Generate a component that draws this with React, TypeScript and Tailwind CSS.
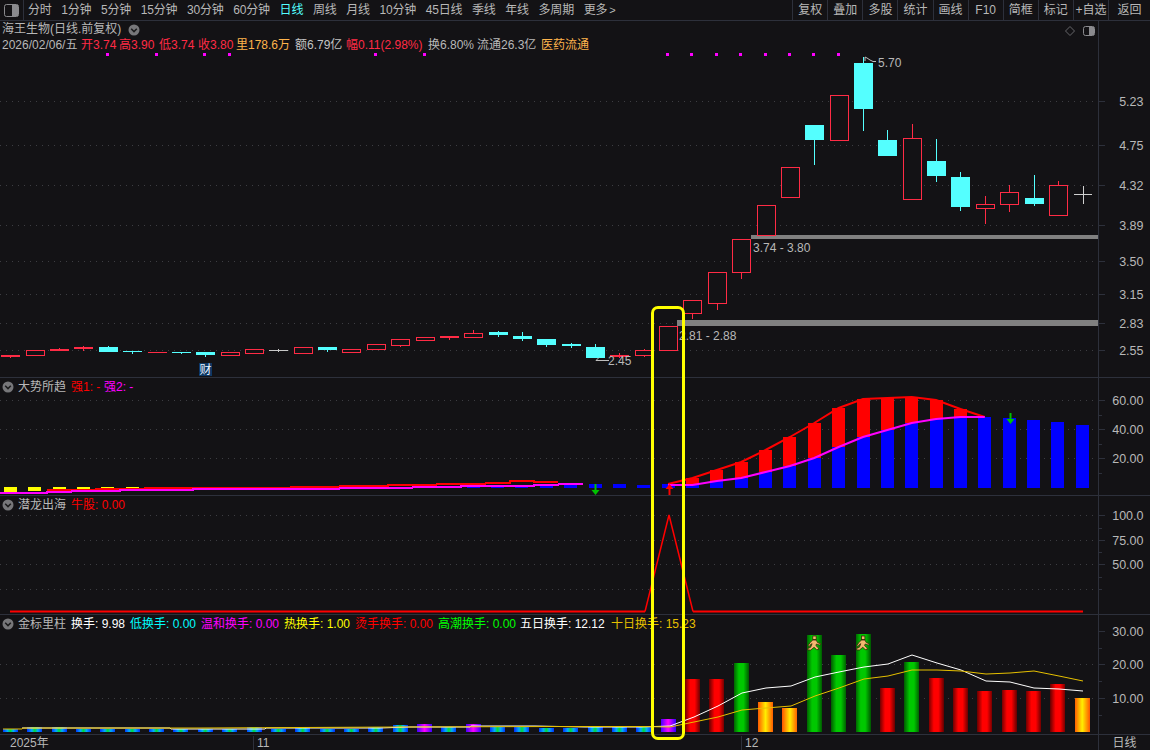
import * as React from "react";

const FONT = "font-['Liberation_Sans','Noto_Sans_CJK_SC',sans-serif]";
const BG = "#131215";
const AXIS_LINE = "#2d303b";
const UP = "#ff2b45";
const DOWN = "#54ffff";

const barX = (i: number) => 10.4 + 24.36 * i;

// [index, bodyTop, bodyBottom, wickTop, wickBottom, kind]
type Candle = [number, number, number, number, number, "up" | "down" | "solid" | "flat"];
const candles: Candle[] = [
    [0, 355, 357, 355, 358, "solid"], [1, 350, 355, 350, 355, "up"], [2, 349, 351, 348, 351, "solid"],
    [3, 347, 349, 346, 351, "solid"], [4, 347, 352, 346, 352, "down"], [5, 351, 352, 351, 354, "down"],
    [6, 352, 353, 352, 353, "solid"], [7, 352, 353, 352, 354, "down"], [8, 352, 355, 352, 357, "down"],
    [9, 352, 355, 352, 355, "up"], [10, 349, 353, 349, 353, "up"], [11, 350, 351, 349, 352, "flat"],
    [12, 347, 353, 347, 353, "up"], [13, 347, 350, 347, 352, "down"], [14, 349, 352, 349, 352, "up"],
    [15, 344, 349, 344, 349, "up"], [16, 339, 345, 339, 347, "up"], [17, 337, 340, 337, 340, "up"],
    [18, 336, 338, 336, 340, "solid"], [19, 333, 337, 330, 337, "up"], [20, 332, 335, 331, 337, "down"],
    [21, 336, 339, 332, 341, "down"], [22, 339, 345, 339, 347, "down"], [23, 344, 346, 343, 348, "down"],
    [24, 347, 358, 344, 358, "down"], [25, 355, 357, 353, 358, "solid"], [26, 350, 355, 349, 357, "up"],
    [27, 326, 350, 326, 350, "up"], [28, 300, 313, 300, 319, "up"], [29, 272, 303, 272, 310, "up"],
    [30, 239, 272, 239, 279, "up"], [31, 205, 235, 205, 235, "up"], [32, 167, 197, 167, 198, "up"],
    [33, 125, 140, 125, 165, "down"], [34, 95, 140, 95, 140, "up"], [35, 63, 109, 57, 131, "down"],
    [36, 140, 156, 130, 156, "down"], [37, 138, 199, 124, 199, "up"], [38, 161, 176, 139, 182, "down"],
    [39, 177, 207, 172, 211, "down"], [40, 204, 208, 196, 224, "up"], [41, 192, 204, 185, 212, "up"],
    [42, 198, 204, 175, 206, "down"], [43, 185, 215, 181, 215, "up"],
];

const pinkDots = [4, 6, 8, 9, 15, 17, 27, 28, 29, 30, 31, 32, 33, 34];

const redTop: [number, number][] = [[27, 484], [28, 478], [29, 470], [30, 462], [31, 450], [32, 437], [33, 423], [34, 408], [35, 399], [36, 398], [37, 397], [38, 400], [39, 409], [40, 417]];
const pinkTop: [number, number][] = [[27, 485], [28, 485], [29, 481], [30, 478], [31, 472], [32, 466], [33, 458], [34, 447], [35, 437], [36, 430], [37, 423], [38, 419], [39, 417], [40, 417]];
const blueTail: [number, number][] = [[41, 418], [42, 420], [43, 422], [44, 425]];
const blueStart: [number, number][] = [[19, 486], [20, 485], [21, 485], [22, 484], [23, 483], [24, 484], [25, 484], [26, 485], [27, 484]];
const yellowDash: [number, number][] = [[0, 494], [1, 491], [2, 491], [3, 490], [4, 489], [5, 489], [6, 488.5], [7, 488.5], [8, 488.5], [9, 488.5], [10, 488.5], [11, 488.5]];

const lowPink = [493, 493, 492, 491, 491, 490, 490, 490, 489, 489, 489, 489, 489, 489, 488, 488, 488, 487, 487, 486, 486, 486, 485, 484];
const lowRed: [number, number][] = [[2, 490], [3, 490], [4, 489], [5, 489], [6, 488], [7, 488], [8, 488], [9, 488], [10, 488], [11, 488], [12, 487], [13, 487], [14, 486], [15, 486], [16, 485], [17, 485], [18, 484], [19, 484], [20, 483], [21, 481], [22, 482]];

const smallTops = [729, 727, 727, 729, 729, 729, 729, 729, 729, 729, 727, 729, 727, 729, 729, 727, 725, 724, 727, 724, 727, 727, 728, 728, 727, 727, 727];
const purpleBars = [17, 19];

const volBars: [number, number, string][] = [
    [28, 679, "r"], [29, 679, "r"], [30, 663, "g"], [31, 702, "o"], [32, 708, "o"], [33, 635, "g"], [34, 655, "g"],
    [35, 634, "g"], [36, 688, "r"], [37, 662, "g"], [38, 678, "r"], [39, 688, "r"], [40, 691, "r"], [41, 690, "r"],
    [42, 691, "r"], [43, 684, "r"], [44, 698, "o"],
];
const whiteLine = "22,728 170,728 171,729 265,729 266,728 380,728 410,727 470,727 471,726 535,726 585,727 640,727 670,726 694,717 718,706 742,693 766,688 791,686 815,677 839,672 864,667 888,664 912,655 937,663 961,670 986,681 1010,682 1034,688 1059,689 1083,691";
const goldLine = "3,729 22,729 23,728 200,728 400,727 560,726.500 640,726.500 670,727 694,722 718,717 742,710 766,708 791,706 815,696 839,688 864,679 888,676 912,670 937,670 961,671 986,674 1010,673 1034,671 1059,676 1083,681";

const periods = ["分时", "1分钟", "5分钟", "15分钟", "30分钟", "60分钟", "日线", "周线", "月线", "10分钟", "45日线", "季线", "年线", "多周期"];
const tools = ["复权", "叠加", "多股", "统计", "画线", "F10", "简框", "标记", "+自选", "返回"];

const Chevron = () => (
    <svg width="12" height="12" viewBox="0 0 12 12" className="shrink-0">
        <circle cx="6" cy="6" r="5.5" fill="#77777a"/>
        <path d="M3.2 4.8 6 7.6 8.8 4.8" fill="none" stroke="#1b1b1d" strokeWidth="1.5"/>
    </svg>
);

const Grid = ({ys}: {ys: number[]}) => (
    <>
        {ys.map((y) => (
            <line key={y} x1="0" x2="1098" y1={y + 0.5} y2={y + 0.5} stroke="#3d3d42" strokeDasharray="1 5"/>
        ))}
    </>
);

const Axis = ({top, height, labels, minor = []}: {top: number; height: number; labels: [string, number][]; minor?: number[]}) => (
    <svg width="52" height={height} viewBox={`0 ${top} 52 ${height}`} className="shrink-0 block">
        <line x1="0.5" x2="0.5" y1={top} y2={top + height} stroke={AXIS_LINE}/>
        {labels.map(([t, y]) => (
            <g key={t}>
                <line x1="0" x2="7" y1={y + 0.5} y2={y + 0.5} stroke={AXIS_LINE}/>
                <text x="45.500" y={y + 4.5} textAnchor="end" fontSize="12.500" fill="#b8b8b8">{t}</text>
            </g>
        ))}
        {minor.map((y) => (
            <line key={y} x1="0" x2="4" y1={y + 0.5} y2={y + 0.5} stroke={AXIS_LINE}/>
        ))}
    </svg>
);

const Arrow = ({x, y, color, down}: {x: number; y: number; color: string; down?: boolean}) => (
    <path
        d={down
            ? `M${x - 1} ${y}h2v6h3l-4 5-4-5h3z`
            : `M${x} ${y}l4 5h-3v6h-2v-6h-3z`}
        fill={color}
    />
);

const Runner = ({x}: {x: number}) => (
    <g transform={`translate(${x - 7} 636)`} stroke="#3a2408" strokeWidth="0.8" fill="#f4b870">
        <rect x="5.5" y="0" width="3.4" height="3.6"/>
        <path d="M5.4 4h3.4l1.5 2.6 3 1.2-.7 1.4-3.4-1.2-.6 1.6 2.6 2.4v1.6h-2L6.800 11.300 3.500 14H.6v-1.500l2.800-1.300 1.400-3.500-1.500.8L2 10.500.8 9.600l1.900-2.800z"/>
    </g>
);

const Quote = () => (
    <div className="flex text-[12px] leading-[14px] h-[14px] whitespace-nowrap text-[#b8b8b8] pl-[2px]">
        <span className="w-[79px]">2026/02/06/五</span>
        <span className="w-[38px] text-[#ff2b45]">开3.74</span>
        <span className="w-[40px] text-[#ff2b45]">高3.90</span>
        <span className="w-[39px] text-[#ff2b45]">低3.74</span>
        <span className="w-[38px] text-[#ff2b45]">收3.80</span>
        <span className="w-[59px] text-[#ffb44c]">里178.6万</span>
        <span className="w-[51px] text-[#c4c4c4]">额6.79亿</span>
        <span className="w-[82px] text-[#ff2b45]">幅0.11(2.98%)</span>
        <span className="w-[49px]">换6.80%</span>
        <span className="w-[64px]">流通26.3亿</span>
        <span className="text-[#ffb44c]">医药流通</span>
    </div>
);

const PanelTitle = ({name, children}: {name: string; children?: React.ReactNode}) => (
    <div className="absolute left-[2px] top-[1px] flex items-center h-[16px] text-[12px] leading-[16px] whitespace-nowrap">
        <Chevron/>
        <span className="ml-[4px] w-[53px] text-[#b8b8b8]">{name}</span>
        {children}
    </div>
);

const PricePanel = () => (
    <div className="relative shrink-0 flex h-[357px] border-b border-[#2d303b]">
        <svg width="1098" height="356" viewBox="0 21 1098 356" className="shrink-0 block">
            <Grid ys={[101, 145, 185, 225, 261, 294, 323, 350]}/>
            {pinkDots.map((i) => (
                <rect key={i} x={Math.round(barX(i)) - 2} y="53" width="3" height="3" fill="#ff00ff"/>
            ))}
            <rect x="751" y="235" width="347" height="4" fill="#808080"/>
            <rect x="677" y="320" width="421" height="6" fill="#808080"/>
            {candles.map(([i, top, bottom, wTop, wBottom, kind]) => {
                const x = Math.round(barX(i));
                const color = kind === "down" ? DOWN : kind === "flat" ? "#c8c8c8" : UP;
                const filled = kind !== "up";
                return (
                    <g key={i} shapeRendering="crispEdges">
                        <line x1={x + 0.5} x2={x + 0.5} y1={wTop} y2={wBottom} stroke={color}/>
                        {filled
                            ? <rect x={x - 9} y={top} width="19" height={Math.max(bottom - top, 1)} fill={color}/>
                            : <rect x={x - 8.5} y={top + 0.5} width="18" height={bottom - top} fill={BG} stroke={color}/>}
                    </g>
                );
            })}
            <path d="M1074 194.500h18M1083.500 186v18" stroke="#d0d0d0" fill="none"/>
            <path d="M865 61V57l2 1 3 2 3 1.500h3" stroke="#bdbdbd" fill="none"/>
            <path d="M609 360.500h-13l3-3" stroke="#bdbdbd" fill="none"/>
            <g fontSize="12" fill="#b8b8b8">
                <text x="878" y="66.500">5.70</text>
                <text x="608" y="365">2.45</text>
                <text x="753" y="252">3.74 - 3.80</text>
                <text x="679" y="340">2.81 - 2.88</text>
            </g>
            <path d="M1070 26.500l4.500 4.500-4.500 4.500-4.500-4.500z" fill="none" stroke="#66666a"/>
            <rect x="1083.500" y="26.500" width="11" height="9" rx="2" fill="none" stroke="#8a8a8e"/>
            <rect x="1089" y="27" width="5" height="8" fill="#8a8a8e"/>
        </svg>
        <Axis
            top={21}
            height={356}
            labels={[["5.23", 101], ["4.75", 145], ["4.32", 185], ["3.89", 225], ["3.50", 261], ["3.15", 294], ["2.83", 323], ["2.55", 350]]}
        />
        <div className="absolute left-0 top-0 w-[700px]">
            <div className="flex items-center h-[17px] pl-[2px] text-[12px] leading-[17px] text-[#b8b8b8] whitespace-nowrap">
                海王生物(日线.前复权)
                <span className="ml-[7px]"><Chevron/></span>
            </div>
            <Quote/>
        </div>
        <div className="absolute left-[199px] top-[342px] flex items-center justify-center w-[13px] h-[13px] bg-[#0d3763] text-[12px] leading-none text-[#e8f4ff]">财</div>
    </div>
);

const TrendPanel = () => {
    const stepped = (pts: [number, number][]) =>
        pts.map(([i, y], n) => `${n === 0 ? "M" : "L"}${barX(i) - 12} ${y}H${barX(i) + 12}`).join("");
    return (
        <div className="relative shrink-0 flex h-[118px] border-b border-[#2d303b]">
            <svg width="1098" height="117" viewBox="0 378 1098 117" className="shrink-0 block">
                <Grid ys={[400, 429, 458]}/>
                <g shapeRendering="crispEdges">
                    {yellowDash.map(([i, y]) => (
                        <rect key={i} x={barX(i) - 6.500} y="487" width="13" height={y - 487} fill="#ffff00"/>
                    ))}
                    {blueStart.map(([i, y]) => (
                        <rect key={i} x={barX(i) - 6.500} y={y} width="13" height={487.500 - y} fill="#0000ff"/>
                    ))}
                    {pinkTop.slice(1).map(([i, y]) => (
                        <rect key={i} x={barX(i) - 6.500} y={y} width="13" height={487.500 - y} fill="#0000ff"/>
                    ))}
                    {blueTail.map(([i, y]) => (
                        <rect key={i} x={barX(i) - 6.500} y={y} width="13" height={487.500 - y} fill="#0000ff"/>
                    ))}
                    {redTop.slice(1, 13).map(([i, y], n) => (
                        <rect key={i} x={barX(i) - 6.500} y={y} width="13" height={pinkTop[n + 1][1] - y} fill="#ff0000"/>
                    ))}
                </g>
                <path d={stepped(lowRed)} fill="none" stroke="#ff0000" strokeWidth="2" shapeRendering="crispEdges"/>
                <path d={stepped(lowPink.map((y, i) => [i, y] as [number, number]))} fill="none" stroke="#ff00ff" strokeWidth="2" shapeRendering="crispEdges"/>
                <polyline points={redTop.map(([i, y]) => `${barX(i)},${y}`).join(" ")} fill="none" stroke="#ff0000" strokeWidth="2"/>
                <polyline points={pinkTop.map(([i, y]) => `${barX(i)},${y}`).join(" ")} fill="none" stroke="#ff00ff" strokeWidth="2"/>
                <Arrow x={595.500} y={484} color="#00c000" down/>
                <Arrow x={669.500} y={484} color="#ff0000"/>
                <Arrow x={1010.500} y={413} color="#00c000" down/>
            </svg>
            <Axis top={378} height={117} labels={[["60.00", 400], ["40.00", 429], ["20.00", 458]]} minor={[415, 444, 473]}/>
            <PanelTitle name="大势所趋">
                <span className="w-[33px] text-[#ff0000]">强1: -</span>
                <span className="text-[#ff00ff]">强2: -</span>
            </PanelTitle>
        </div>
    );
};

const DragonPanel = () => (
    <div className="relative shrink-0 flex h-[119px] border-b border-[#2d303b]">
        <svg width="1098" height="118" viewBox="0 496 1098 118" className="shrink-0 block">
            <Grid ys={[515, 540, 564, 589]}/>
            <path d="M645 611.500 669 515 693 611.500" fill="none" stroke="#ff0000" strokeWidth="1.500"/>
            <path d="M10 611.500H645M693 611.500H1083" fill="none" stroke="#ff0000" strokeWidth="2"/>
        </svg>
        <Axis top={496} height={118} labels={[["100.0", 515], ["75.00", 540], ["50.00", 564]]} minor={[528, 552, 577, 589]}/>
        <PanelTitle name="潜龙出海">
            <span className="text-[#ff0000]">牛股: 0.00</span>
        </PanelTitle>
    </div>
);

const VolumePanel = () => (
    <div className="relative shrink-0 flex h-[119px]">
        <svg width="1098" height="119" viewBox="0 615 1098 119" className="shrink-0 block">
            <defs>
                <linearGradient id="barRed">
                    <stop offset="0" stopColor="#6e0000"/><stop offset="0.35" stopColor="#ff0000"/><stop offset="0.65" stopColor="#ff0000"/><stop offset="1" stopColor="#6e0000"/>
                </linearGradient>
                <linearGradient id="barGreen">
                    <stop offset="0" stopColor="#005f00"/><stop offset="0.35" stopColor="#00c800"/><stop offset="0.65" stopColor="#00c800"/><stop offset="1" stopColor="#005f00"/>
                </linearGradient>
                <linearGradient id="barOrange">
                    <stop offset="0" stopColor="#ff5a00"/><stop offset="0.5" stopColor="#ffee00"/><stop offset="1" stopColor="#ff5a00"/>
                </linearGradient>
                <linearGradient id="barSmall">
                    <stop offset="0" stopColor="#0033ff"/><stop offset="0.3" stopColor="#00aaff"/><stop offset="0.5" stopColor="#00dd33"/><stop offset="0.7" stopColor="#00aaff"/><stop offset="1" stopColor="#0033ff"/>
                </linearGradient>
                <linearGradient id="barPurple">
                    <stop offset="0" stopColor="#3a00ff"/><stop offset="0.5" stopColor="#ff00ff"/><stop offset="1" stopColor="#3a00ff"/>
                </linearGradient>
            </defs>
            <Grid ys={[664, 698]}/>
            <g shapeRendering="crispEdges">
                {smallTops.map((y, i) => (
                    <rect key={i} x={barX(i) - 7.500} y={y} width="15" height={732 - y} fill={purpleBars.includes(i) ? "url(#barPurple)" : "url(#barSmall)"}/>
                ))}
                <rect x={barX(27) - 7.500} y="719" width="15" height="13" fill="url(#barPurple)"/>
                {volBars.map(([i, y, c]) => (
                    <rect key={i} x={barX(i) - 7.500} y={y} width="15" height={732 - y} fill={c === "r" ? "url(#barRed)" : c === "g" ? "url(#barGreen)" : "url(#barOrange)"}/>
                ))}
            </g>
            <polyline points={whiteLine} fill="none" stroke="#ffffff"/>
            <polyline points={goldLine} fill="none" stroke="#e6c000"/>
            <Runner x={barX(33)}/>
            <Runner x={barX(35)}/>
        </svg>
        <Axis top={615} height={119} labels={[["30.00", 631], ["20.00", 664], ["10.00", 698]]} minor={[648, 681, 715]}/>
        <PanelTitle name="金标里柱">
            <span className="w-[59px] text-[#ffffff]">换手: 9.98</span>
            <span className="w-[71px] text-[#00ffff]">低换手: 0.00</span>
            <span className="w-[83px] text-[#ff00ff]">温和换手: 0.00</span>
            <span className="w-[71px] text-[#ffff00]">热换手: 1.00</span>
            <span className="w-[83px] text-[#ff0000]">烫手换手: 0.00</span>
            <span className="w-[82px] text-[#00ff00]">高潮换手: 0.00</span>
            <span className="w-[91px] text-[#ffffff]">五日换手: 12.12</span>
            <span className="text-[#e6c000]">十日换手: 15.23</span>
        </PanelTitle>
    </div>
);

const App = () => (
    <div className={`relative flex flex-col w-[1150px] h-[750px] overflow-hidden bg-[#131215] ${FONT}`}>
        <div className="shrink-0 flex items-center h-[21px] border-b border-[#2d303b] text-[12px] leading-[16px] text-[#b8b8b8] whitespace-nowrap">
            <div className="flex items-center justify-center w-[24px] h-full border-r border-[#2d303b]">
                <svg width="15" height="13" viewBox="0 0 15 13">
                    <rect x="0.500" y="0.500" width="14" height="12" rx="2" fill="none" stroke="#8a8a8e"/>
                    <rect x="8" y="1" width="6" height="11" fill="#8a8a8e"/>
                </svg>
            </div>
            <div className="flex gap-[9.700px] ml-[4px] tracking-[-0.2px]">
                {periods.map((p) => (
                    <span key={p} className={p === "日线" ? "text-[#54ffff]" : ""}>{p}</span>
                ))}
                <span className="flex items-center">更多<span className="ml-[2px] text-[11px]">&gt;</span></span>
            </div>
            <div className="ml-auto flex h-full">
                {tools.map((t, n) => (
                    <span
                        key={t}
                        className={`flex items-center justify-center h-full border-l border-[#2d303b] ${n === 9 ? "w-[42px]" : "w-[35.100px]"}`}
                    >
                        {t}
                    </span>
                ))}
            </div>
        </div>

        <PricePanel/>
        <TrendPanel/>
        <DragonPanel/>
        <VolumePanel/>

        <div className="flex h-[16px] border-t border-[#2d303b] text-[12px] leading-[14px] text-[#b8b8b8]">
            <div className="flex-1 flex items-center">
                <span className="w-[253px] pl-[10px]">2025年</span>
                <span className="w-[488px] pl-[3px] border-l border-[#2d303b]">11</span>
                <span className="pl-[3px] border-l border-[#2d303b]">12</span>
            </div>
            <div className="flex items-center justify-center w-[52px] border-l border-[#2d303b]">日线</div>
        </div>

        <div className="absolute left-[651px] top-[306px] w-[34px] h-[434px] border-[3px] border-[#ffff00] rounded-[7px] pointer-events-none"/>
    </div>
);

export default App;
